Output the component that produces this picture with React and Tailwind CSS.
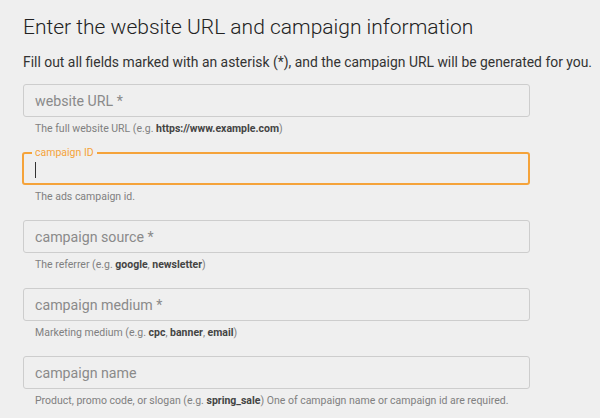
import React from 'react'

const fields = [
  {
    label: 'website URL *',
    help: <>The full website URL (e.g. <b className="font-bold text-[#444]">https://www.example.com</b>)</>
  },
  {
    label: 'campaign ID',
    focused: true,
    help: <>The ads campaign id.</>
  },
  {
    label: 'campaign source *',
    help: <>The referrer (e.g. <b className="font-bold text-[#444]">google</b>, <b className="font-bold text-[#444]">newsletter</b>)</>
  },
  {
    label: 'campaign medium *',
    help: <>Marketing medium (e.g. <b className="font-bold text-[#444]">cpc</b>, <b className="font-bold text-[#444]">banner</b>, <b className="font-bold text-[#444]">email</b>)</>
  },
  {
    label: 'campaign name',
    help: <>Product, promo code, or slogan (e.g. <b className="font-bold text-[#444]">spring_sale</b>) One of campaign name or campaign id are required.</>
  }
]

function Field({label, help, focused}) {
  return (
    <div className="mb-[16px]">
      {focused ? (
        <div className="relative h-[33px] w-[508px] rounded-[3px] border-2 border-[#f5a33a] -ml-px">
          <span className="absolute -top-[8px] left-[8px] bg-[#efefef] px-[3px] text-[10.5px] leading-[14px] text-[#f5a33a]">{label}</span>
          <span className="absolute left-[11px] top-[8px] h-[16px] w-px bg-[#333]"></span>
        </div>
      ) : (
        <div className="flex h-[33px] w-[507px] items-center rounded-[3px] border border-[#cdcdcd] pl-[11px] pt-[2px] text-[14.2px] text-[#8a8a8a]">
          {label}
        </div>
      )}
      <div className="mt-[5px] pl-[12px] text-[10.5px] leading-[14px] text-[#808080]">{help}</div>
    </div>
  )
}

export default function App() {
  return (
    <div className="min-h-[418px] w-[600px] bg-[#efefef] pl-[23px] pt-[13px]" style={{fontFamily: 'Roboto, "Liberation Sans", sans-serif'}}>
      <h1 className="text-[21px] font-light leading-[28px] text-[#222]">Enter the website URL and campaign information</h1>
      <p className="mt-[12px] text-[13.9px] leading-[18px] text-[#333]">
        Fill out all fields marked with an asterisk (*), and the campaign URL will be generated for you.
      </p>
      <div className="mt-[13px]">
        {fields.map((f, i) => (
          <Field key={i} {...f} />
        ))}
      </div>
    </div>
  )
}
